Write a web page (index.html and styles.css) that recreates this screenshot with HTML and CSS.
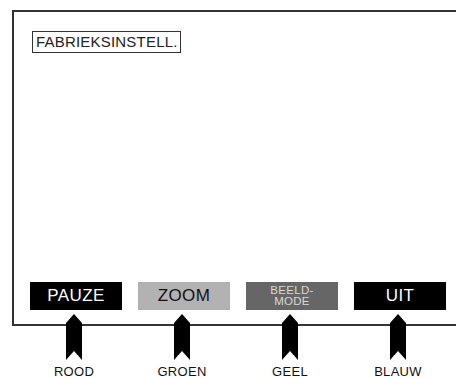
FILE: index.html
```html
<!DOCTYPE html>
<html>
<head>
<meta charset="utf-8">
<link rel="stylesheet" href="styles.css">
</head>
<body>
<div class="screen">
  <div class="title">FABRIEKSINSTELL.</div>
  <div class="buttons">
    <div class="btn btn-black">PAUZE</div>
    <div class="btn btn-light">ZOOM</div>
    <div class="btn btn-dark"><span>BEELD-</span><span>MODE</span></div>
    <div class="btn btn-black">UIT</div>
  </div>
</div>
<div class="keys">
  <div class="key">
    <svg class="arrow" width="16" height="46" viewBox="0 0 16 46"><path d="M8 0 L16 9 L16 46 L8 37 L0 46 L0 9 Z" fill="#000"/></svg>
    <div class="label">ROOD</div>
  </div>
  <div class="key">
    <svg class="arrow" width="16" height="46" viewBox="0 0 16 46"><path d="M8 0 L16 9 L16 46 L8 37 L0 46 L0 9 Z" fill="#000"/></svg>
    <div class="label">GROEN</div>
  </div>
  <div class="key">
    <svg class="arrow" width="16" height="46" viewBox="0 0 16 46"><path d="M8 0 L16 9 L16 46 L8 37 L0 46 L0 9 Z" fill="#000"/></svg>
    <div class="label">GEEL</div>
  </div>
  <div class="key">
    <svg class="arrow" width="16" height="46" viewBox="0 0 16 46"><path d="M8 0 L16 9 L16 46 L8 37 L0 46 L0 9 Z" fill="#000"/></svg>
    <div class="label">BLAUW</div>
  </div>
</div>
</body>
</html>
```
FILE: styles.css
```css
html, body {
  margin: 0;
  padding: 0;
  background: #fff;
  font-family: "Liberation Sans", Arial, sans-serif;
  color: #111;
}
.screen {
  box-sizing: border-box;
  margin: 10px 0 0 12px;
  height: 316px;
  border-top: 2px solid #333;
  border-left: 2px solid #333;
  border-bottom: 2px solid #333;
  padding: 19px 0 14px 18px;
  display: flex;
  flex-direction: column;
  justify-content: space-between;
  align-items: flex-start;
}
.title {
  border: 1px solid #333;
  font-size: 15px;
  line-height: 20px;
  padding: 0 2px 0 3px;
  letter-spacing: 0.2px;
  color: #222;
}
.buttons {
  display: flex;
  gap: 16px;
  margin-left: -2px;
}
.btn {
  width: 92px;
  height: 28px;
  display: flex;
  flex-direction: column;
  align-items: center;
  justify-content: center;
  font-size: 17px;
  letter-spacing: 0.4px;
}
.btn-black { background: #000; color: #fff; }
.btn-light { background: #b2b2b2; color: #111; }
.btn-dark {
  background: #666;
  color: #d8d8d8;
  font-size: 11.5px;
  line-height: 11px;
  letter-spacing: 0.3px;
}
.keys {
  display: flex;
  gap: 16px;
  margin: -12px 0 0 30px;
  position: relative;
}
.key {
  width: 92px;
  display: flex;
  flex-direction: column;
  align-items: center;
}
.arrow {
  display: block;
  margin-left: -4px;
}
.label {
  margin-top: 5px;
  font-size: 13px;
  line-height: 13px;
  letter-spacing: 0.3px;
  color: #111;
  margin-left: -4px;
}
```
